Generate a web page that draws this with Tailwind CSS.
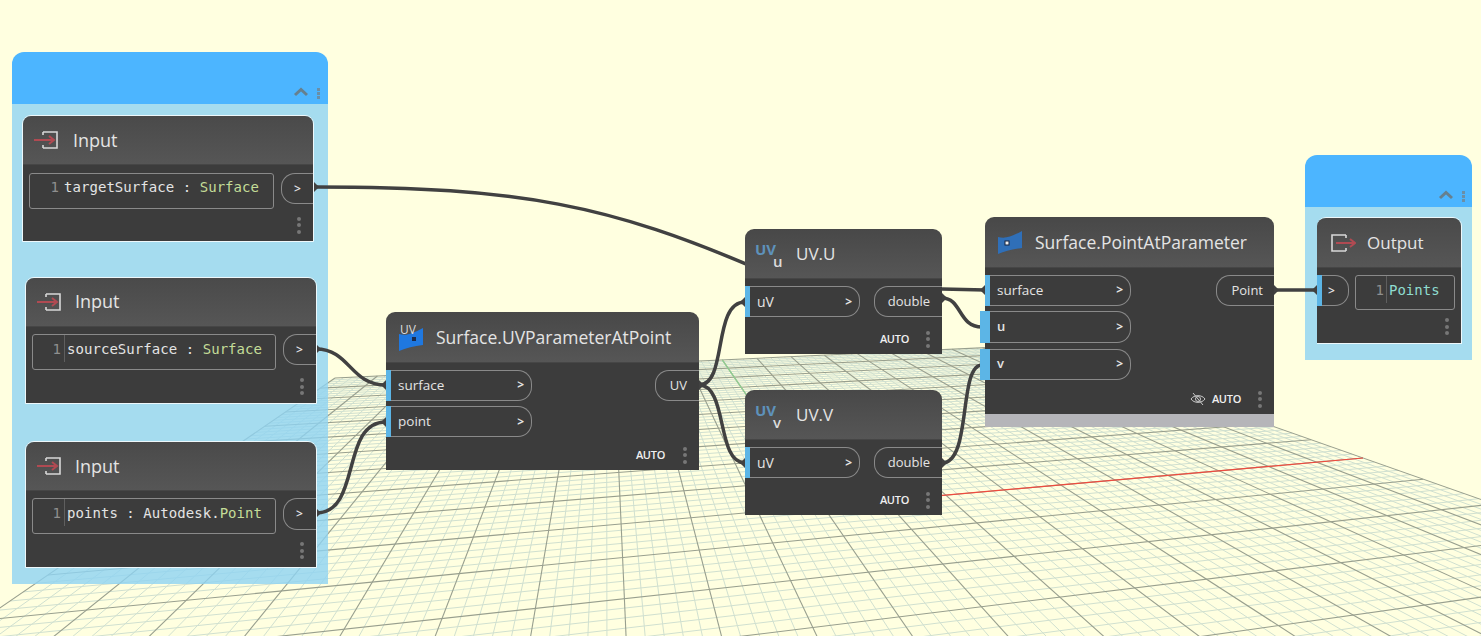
<!DOCTYPE html>
<html lang="en">
<head>
<meta charset="UTF-8">
<title>Dynamo graph</title>
<script src="https://cdn.jsdelivr.net/npm/@tailwindcss/browser@4"></script>
</head>
<body class="bg-[#ffffe0]">
<div class="relative w-[1481px] h-[636px] overflow-hidden bg-[#ffffe0] font-['Open_Sans',sans-serif] text-[#e4e4e4]">

  <!-- background grid, filled in by the script -->
  <svg id="grid" class="absolute inset-0" width="1481" height="636"></svg>

  <!-- groups -->
  <div class="absolute left-[12px] top-[52px] w-[316px] h-[532px] flex flex-col">
    <div class="h-[52px] bg-[#4cb5ff] rounded-t-[12px] flex items-end justify-end pr-[8px] pb-[5px] gap-[8px]">
      <svg width="16" height="10" viewBox="0 0 16 10" class="mb-[2px]"><path d="M2 8 L8 2.5 L14 8" fill="none" stroke="#66808f" stroke-width="3"/></svg>
      <div class="flex flex-col gap-[1px]"><span class="size-[3px] bg-[#6a8fa8]"></span><span class="size-[3px] bg-[#6a8fa8]"></span><span class="size-[3px] bg-[#6a8fa8]"></span></div>
    </div>
    <div class="flex-1 bg-[#8ed3f3]/80"></div>
  </div>
  <div class="absolute left-[1305px] top-[155px] w-[167px] h-[205px] flex flex-col">
    <div class="h-[52px] bg-[#4cb5ff] rounded-t-[12px] flex items-end justify-end pr-[7px] pb-[5px] gap-[8px]">
      <svg width="16" height="10" viewBox="0 0 16 10" class="mb-[2px]"><path d="M2 8 L8 2.5 L14 8" fill="none" stroke="#66808f" stroke-width="3"/></svg>
      <div class="flex flex-col gap-[1px]"><span class="size-[3px] bg-[#6a8fa8]"></span><span class="size-[3px] bg-[#6a8fa8]"></span><span class="size-[3px] bg-[#6a8fa8]"></span></div>
    </div>
    <div class="flex-1 bg-[#a5dcef]"></div>
  </div>

  <!-- wires -->
  <svg class="absolute inset-0" width="1481" height="636" fill="none" stroke="#414141" stroke-width="3.5">
    <path d="M316 187 C 520 187, 610 205, 760 270"/>
    <path d="M316 349 C 350 349, 350 385, 386 385"/>
    <path d="M316 513 C 362 513, 340 422, 386 422"/>
    <path d="M699 385 C 728 385, 712 302, 745 302"/>
    <path d="M699 385 C 728 385, 716 463, 745 463"/>
    <path d="M942 289 L985 290"/>
    <path d="M942 298 C 962 298, 958 327, 982 327"/>
    <path d="M942 463 C 972 463, 958 365, 982 365"/>
    <path d="M1274 290 L1317 290"/>
    <g fill="#414141" stroke="none">
      <path d="M314 182 L319 187 L314 192 Z"/><path d="M316 344 L321 349 L316 354 Z"/><path d="M316 508 L321 513 L316 518 Z"/>
      <path d="M386 380 L381 385 L386 390 Z"/><path d="M386 417 L381 422 L386 427 Z"/>
      <path d="M699 380 L704 385 L699 390 Z"/><path d="M745 297 L740 302 L745 307 Z"/><path d="M745 458 L740 463 L745 468 Z"/>
      <path d="M942 293 L947 298 L942 303 Z"/><path d="M942 458 L947 463 L942 468 Z"/>
      <path d="M985 285 L980 290 L985 295 Z"/>
      <path d="M1274 285 L1279 290 L1274 295 Z"/><path d="M1317 285 L1312 290 L1317 295 Z"/>
    </g>
  </svg>

  <!-- Input 1 -->
  <div class="absolute left-[22px] top-[115px] w-[292px] h-[127px] flex flex-col border border-[#eef8fb] rounded-t-[9px] overflow-hidden">
    <div class="h-[49px] shrink-0 bg-linear-to-b from-[#4a4a4a] to-[#565656] border-b border-[#464646] flex items-center pl-[11px] gap-[15px] text-[18px]">
      <svg width="24" height="18" viewBox="0 0 24 18"><path d="M9 1 H23 V17 H9 M9 1 V4 M9 14 V17" fill="none" stroke="#d8d8d8" stroke-width="1.6"/><path d="M0 9 H19 M15 5 L20 9 L15 13" fill="none" stroke="#b04a52" stroke-width="2"/></svg>
      <span>Input</span>
    </div>
    <div class="flex-1 bg-[#3c3c3c] flex flex-col pt-[8px]">
      <div class="flex pl-[6px] gap-[7px]">
        <div class="w-[245px] h-[36px] border border-[#8a8a8a] rounded-[3px] flex items-start pt-[4px] font-['DejaVu_Sans_Mono',monospace] text-[14px] leading-[18px] tracking-[0.05px]">
          <span class="w-[29px] text-right text-[#8f8f8f]">1</span><span class="pl-[5px]">targetSurface : <span class="text-[#c4dc98]">Surface</span></span>
        </div>
        <div class="flex-1 h-[31px] border border-r-0 border-[#8a8a8a] rounded-l-[14px] flex items-center pl-[12px] text-[12px] font-semibold">&gt;</div>
      </div>
      <div class="flex-1 flex items-center justify-end pr-[12px]">
        <div class="flex flex-col gap-[2.5px]"><span class="size-[4px] rounded-full bg-[#777]"></span><span class="size-[4px] rounded-full bg-[#777]"></span><span class="size-[4px] rounded-full bg-[#777]"></span></div>
      </div>
    </div>
  </div>

  <!-- Input 2 -->
  <div class="absolute left-[25px] top-[277px] w-[292px] h-[127px] flex flex-col border border-[#eef8fb] rounded-t-[9px] overflow-hidden">
    <div class="h-[49px] shrink-0 bg-linear-to-b from-[#4a4a4a] to-[#565656] border-b border-[#464646] flex items-center pl-[11px] gap-[14px] text-[18px]">
      <svg width="24" height="18" viewBox="0 0 24 18"><path d="M9 1 H23 V17 H9 M9 1 V4 M9 14 V17" fill="none" stroke="#d8d8d8" stroke-width="1.6"/><path d="M0 9 H19 M15 5 L20 9 L15 13" fill="none" stroke="#b04a52" stroke-width="2"/></svg>
      <span class="-mt-[2px]">Input</span>
    </div>
    <div class="flex-1 bg-[#3c3c3c] flex flex-col pt-[7px]">
      <div class="flex pl-[6px] gap-[7px]">
        <div class="w-[244px] h-[36px] border border-[#8a8a8a] rounded-[3px] flex items-start font-['DejaVu_Sans_Mono',monospace] text-[14px] leading-[18px] tracking-[0.05px]">
          <span class="w-[28px] mt-[5px] text-right text-[#8f8f8f]">1</span><span class="ml-[3px] pl-[2px] pt-[5px] pb-[4px] border-l border-[#5f5f5f]">sourceSurface : <span class="text-[#c4dc98]">Surface</span></span>
        </div>
        <div class="flex-1 h-[31px] border border-r-0 border-[#8a8a8a] rounded-l-[14px] flex items-center pl-[12px] text-[12px] font-semibold">&gt;</div>
      </div>
      <div class="flex-1 flex items-center justify-end pr-[12px]">
        <div class="flex flex-col gap-[2.5px]"><span class="size-[4px] rounded-full bg-[#777]"></span><span class="size-[4px] rounded-full bg-[#777]"></span><span class="size-[4px] rounded-full bg-[#777]"></span></div>
      </div>
    </div>
  </div>

  <!-- Input 3 -->
  <div class="absolute left-[25px] top-[441px] w-[292px] h-[127px] flex flex-col border border-[#eef8fb] rounded-t-[9px] overflow-hidden">
    <div class="h-[49px] shrink-0 bg-linear-to-b from-[#4a4a4a] to-[#565656] border-b border-[#464646] flex items-center pl-[11px] gap-[14px] text-[18px]">
      <svg width="24" height="18" viewBox="0 0 24 18"><path d="M9 1 H23 V17 H9 M9 1 V4 M9 14 V17" fill="none" stroke="#d8d8d8" stroke-width="1.6"/><path d="M0 9 H19 M15 5 L20 9 L15 13" fill="none" stroke="#b04a52" stroke-width="2"/></svg>
      <span>Input</span>
    </div>
    <div class="flex-1 bg-[#3c3c3c] flex flex-col pt-[7px]">
      <div class="flex pl-[6px] gap-[7px]">
        <div class="w-[244px] h-[36px] border border-[#8a8a8a] rounded-[3px] flex items-start font-['DejaVu_Sans_Mono',monospace] text-[14px] leading-[18px] tracking-[0.05px]">
          <span class="w-[28px] mt-[5px] text-right text-[#8f8f8f]">1</span><span class="ml-[3px] pl-[2px] pt-[5px] pb-[4px] border-l border-[#5f5f5f]">points : Autodesk.<span class="text-[#c4dc98]">Point</span></span>
        </div>
        <div class="flex-1 h-[32px] border border-r-0 border-[#8a8a8a] rounded-l-[14px] flex items-center pl-[12px] text-[12px] font-semibold">&gt;</div>
      </div>
      <div class="flex-1 flex items-center justify-end pr-[12px]">
        <div class="flex flex-col gap-[2.5px]"><span class="size-[4px] rounded-full bg-[#777]"></span><span class="size-[4px] rounded-full bg-[#777]"></span><span class="size-[4px] rounded-full bg-[#777]"></span></div>
      </div>
    </div>
  </div>

  <!-- Surface.UVParameterAtPoint -->
  <div class="absolute left-[386px] top-[312px] w-[313px] h-[158px] flex flex-col rounded-t-[9px]">
    <div class="h-[51px] shrink-0 rounded-t-[9px] bg-linear-to-b from-[#484848] to-[#565656] border-b border-[#464646] flex items-center pl-[12px] gap-[12px] text-[17.5px]">
      <div class="relative w-[26px] h-[30px]">
        <svg class="absolute left-0 top-[5px]" width="26" height="24" viewBox="0 0 26 24"><path d="M1 7 C8 9 14 7 25 1 V18 C16 19 8 21 1 24 Z" fill="#1f78e0"/><rect x="14" y="10" width="4" height="4" fill="#1b2a4a"/></svg>
        <span class="absolute left-[2px] top-[1px] text-[12px] leading-[14px] text-[#dcdcdc]">UV</span>
      </div>
      <span>Surface.UVParameterAtPoint</span>
    </div>
    <div class="flex-1 bg-[#3c3c3c] flex flex-col">
      <div class="flex justify-between pt-[7px]">
        <div class="flex flex-col gap-[5px]">
          <div class="flex h-[31px] w-[146px]"><div class="w-[5px] bg-[#5cb5e6]"></div><div class="flex-1 border border-l-0 border-[#8a8a8a] rounded-r-[14px] flex items-center justify-between pl-[7px] pr-[7px] text-[13.5px] font-medium pb-[1px]"><span>surface</span><span class="font-bold text-[12px]">&gt;</span></div></div>
          <div class="flex h-[31px] w-[146px]"><div class="w-[5px] bg-[#5cb5e6]"></div><div class="flex-1 border border-l-0 border-[#8a8a8a] rounded-r-[14px] flex items-center justify-between pl-[7px] pr-[7px] text-[13.5px] font-medium"><span>point</span><span class="font-bold text-[12px]">&gt;</span></div></div>
        </div>
        <div class="w-[44px] h-[31px] border border-r-0 border-[#8a8a8a] rounded-l-[14px] flex items-center justify-end pr-[12px] text-[13px] font-medium">UV</div>
      </div>
      <div class="flex-1 flex items-center justify-end gap-[18px] pr-[12px] pt-[3px]">
        <span class="text-[11px] font-semibold tracking-[-0.3px] text-[#f0f0f0]">AUTO</span>
        <div class="flex flex-col gap-[2.5px]"><span class="size-[4px] rounded-full bg-[#777]"></span><span class="size-[4px] rounded-full bg-[#777]"></span><span class="size-[4px] rounded-full bg-[#777]"></span></div>
      </div>
    </div>
  </div>

  <!-- UV.U -->
  <div class="absolute left-[745px] top-[229px] w-[197px] h-[125px] flex flex-col rounded-t-[9px]">
    <div class="h-[50px] shrink-0 rounded-t-[9px] bg-linear-to-b from-[#484848] to-[#565656] border-b border-[#464646] flex items-center pl-[10px] gap-[11px] text-[17px]">
      <div class="relative w-[30px] h-[34px]">
        <span class="absolute left-0 top-[5px] text-[15px] leading-[14px] font-bold text-[#5e92bb]">UV</span>
        <span class="absolute left-[18px] top-[19px] text-[15px] leading-[10px] font-semibold text-[#dcdcdc]">u</span>
      </div>
      <span>UV.U</span>
    </div>
    <div class="flex-1 bg-[#3c3c3c] flex flex-col">
      <div class="flex justify-between pt-[7px]">
        <div class="flex h-[31px] w-[115px]"><div class="w-[5px] bg-[#5cb5e6]"></div><div class="flex-1 border border-l-0 border-[#8a8a8a] rounded-r-[14px] flex items-center justify-between pl-[7px] pr-[7px] text-[14px] font-medium"><span>uV</span><span class="font-bold text-[12px]">&gt;</span></div></div>
        <div class="w-[68px] h-[31px] border border-r-0 border-[#8a8a8a] rounded-l-[14px] flex items-center justify-end pr-[12px] text-[13px] font-medium pt-[1px]">double</div>
      </div>
      <div class="flex-1 flex items-center justify-end gap-[17px] pr-[12px] pt-[7px]">
        <span class="text-[11px] font-semibold tracking-[-0.3px] text-[#f0f0f0]">AUTO</span>
        <div class="flex flex-col gap-[2.5px]"><span class="size-[4px] rounded-full bg-[#777]"></span><span class="size-[4px] rounded-full bg-[#777]"></span><span class="size-[4px] rounded-full bg-[#777]"></span></div>
      </div>
    </div>
  </div>

  <!-- UV.V -->
  <div class="absolute left-[745px] top-[390px] w-[197px] h-[125px] flex flex-col rounded-t-[9px]">
    <div class="h-[50px] shrink-0 rounded-t-[9px] bg-linear-to-b from-[#484848] to-[#565656] border-b border-[#464646] flex items-center pl-[10px] gap-[11px] text-[17px]">
      <div class="relative w-[30px] h-[34px]">
        <span class="absolute left-0 top-[5px] text-[15px] leading-[14px] font-bold text-[#5e92bb]">UV</span>
        <span class="absolute left-[18px] top-[19px] text-[15px] leading-[10px] font-semibold text-[#dcdcdc]">v</span>
      </div>
      <span>UV.V</span>
    </div>
    <div class="flex-1 bg-[#3c3c3c] flex flex-col">
      <div class="flex justify-between pt-[7px]">
        <div class="flex h-[31px] w-[115px]"><div class="w-[5px] bg-[#5cb5e6]"></div><div class="flex-1 border border-l-0 border-[#8a8a8a] rounded-r-[14px] flex items-center justify-between pl-[7px] pr-[7px] text-[14px] font-medium"><span>uV</span><span class="font-bold text-[12px]">&gt;</span></div></div>
        <div class="w-[68px] h-[31px] border border-r-0 border-[#8a8a8a] rounded-l-[14px] flex items-center justify-end pr-[12px] text-[13px] font-medium pt-[1px]">double</div>
      </div>
      <div class="flex-1 flex items-center justify-end gap-[17px] pr-[12px] pt-[7px]">
        <span class="text-[11px] font-semibold tracking-[-0.3px] text-[#f0f0f0]">AUTO</span>
        <div class="flex flex-col gap-[2.5px]"><span class="size-[4px] rounded-full bg-[#777]"></span><span class="size-[4px] rounded-full bg-[#777]"></span><span class="size-[4px] rounded-full bg-[#777]"></span></div>
      </div>
    </div>
  </div>

  <!-- Surface.PointAtParameter -->
  <div class="absolute left-[985px] top-[217px] w-[289px] h-[210px] flex flex-col rounded-t-[9px]">
    <div class="h-[51px] shrink-0 rounded-t-[9px] bg-linear-to-b from-[#484848] to-[#565656] border-b border-[#464646] flex items-center pl-[12px] gap-[12px] text-[17.5px]">
      <svg width="26" height="24" viewBox="0 0 26 24"><path d="M1 7 C8 9 14 7 25 1 V18 C16 19 8 21 1 24 Z" fill="#2f6fb8"/><rect x="8" y="11" width="4" height="4" fill="#f0f0f0" stroke="#15233f" stroke-width="1"/></svg>
      <span>Surface.PointAtParameter</span>
    </div>
    <div class="flex-1 bg-[#3c3c3c] flex flex-col">
      <div class="flex justify-between pt-[7px]">
        <div class="flex flex-col">
          <div class="flex h-[31px] w-[146px]"><div class="w-[5px] bg-[#5cb5e6]"></div><div class="flex-1 border border-l-0 border-[#8a8a8a] rounded-r-[14px] flex items-center justify-between pl-[7px] pr-[7px] text-[13.5px] font-medium pb-[1px]"><span>surface</span><span class="font-bold text-[12px]">&gt;</span></div></div>
          <div class="flex h-[32px] w-[151px] -ml-[5px] mt-[5px]"><div class="w-[10px] bg-[#5cb5e6]"></div><div class="flex-1 border border-l-0 border-[#8a8a8a] rounded-r-[14px] flex items-center justify-between pl-[7px] pr-[7px] text-[13px] font-semibold pb-[1px]"><span>u</span><span class="font-bold text-[12px]">&gt;</span></div></div>
          <div class="flex h-[31px] w-[151px] -ml-[5px] mt-[6px]"><div class="w-[10px] bg-[#5cb5e6]"></div><div class="flex-1 border border-l-0 border-[#8a8a8a] rounded-r-[14px] flex items-center justify-between pl-[7px] pr-[7px] text-[13px] font-semibold pb-[2px]"><span>v</span><span class="font-bold text-[12px]">&gt;</span></div></div>
        </div>
        <div class="w-[58px] h-[31px] border border-r-0 border-[#8a8a8a] rounded-l-[14px] flex items-center justify-end pr-[11px] text-[13px] font-medium">Point</div>
      </div>
      <div class="flex-1 flex items-center justify-end pr-[12px] pt-[4px]">
        <svg width="16" height="14" viewBox="0 0 16 14" fill="none" stroke="#c8c8c8" stroke-width="1" class="mr-[6px]"><path d="M1 7 C4 2.5 12 2.5 15 7 C12 11.5 4 11.5 1 7 Z"/><circle cx="8" cy="7" r="2.5"/><path d="M3 1 L13 13"/></svg>
        <span class="text-[11px] font-semibold tracking-[-0.3px] text-[#f0f0f0] mr-[17px]">AUTO</span>
        <div class="flex flex-col gap-[2.5px]"><span class="size-[4px] rounded-full bg-[#777]"></span><span class="size-[4px] rounded-full bg-[#777]"></span><span class="size-[4px] rounded-full bg-[#777]"></span></div>
      </div>
    </div>
    <div class="h-[13px] bg-[#b5b5b9]"></div>
  </div>

  <!-- Output -->
  <div class="absolute left-[1317px] top-[217px] w-[145px] h-[127px] flex flex-col border border-[#eef8fb] border-l-0 rounded-t-[9px] overflow-hidden">
    <div class="h-[50px] shrink-0 bg-linear-to-b from-[#4a4a4a] to-[#565656] border-b border-[#464646] flex items-center pl-[14px] gap-[11px] text-[17px]">
      <svg width="25" height="18" viewBox="0 0 25 18"><path d="M15 1 H1 V17 H15 M15 1 V4 M15 14 V17" fill="none" stroke="#d8d8d8" stroke-width="1.6"/><path d="M5 9 H23 M19 5 L24 9 L19 13" fill="none" stroke="#b04a52" stroke-width="2"/></svg>
      <span>Output</span>
    </div>
    <div class="flex-1 bg-[#3c3c3c] flex flex-col pt-[7px]">
      <div class="flex gap-[6px]">
        <div class="flex h-[31px] w-[32px]"><div class="w-[5px] bg-[#5cb5e6]"></div><div class="flex-1 border border-l-0 border-[#8a8a8a] rounded-r-[14px] flex items-center pl-[6px] text-[12px] font-semibold">&gt;</div></div>
        <div class="w-[100px] h-[35px] border border-[#8a8a8a] rounded-[3px] flex items-start font-['DejaVu_Sans_Mono',monospace] text-[14px] leading-[18px]">
          <span class="w-[28px] mt-[5px] text-right text-[#8f8f8f]">1</span><span class="ml-[2px] pl-[2px] pt-[5px] pb-[4px] border-l border-[#5f5f5f] text-[#8fdcd0]">Points</span>
        </div>
      </div>
      <div class="flex-1 flex items-center justify-end pr-[12px]">
        <div class="flex flex-col gap-[2.5px]"><span class="size-[4px] rounded-full bg-[#777]"></span><span class="size-[4px] rounded-full bg-[#777]"></span><span class="size-[4px] rounded-full bg-[#777]"></span></div>
      </div>
    </div>
  </div>
</div>

<script>
  // projective map of the ground plane; s across, t=1 is the red axis line
  var p00 = [335, 378], p10 = [1042, 345], p11 = [1363, 458], p01 = [48, 575];

  function makeHomography() {
    var dx1 = p10[0] - p11[0], dx2 = p01[0] - p11[0], sx = p00[0] - p10[0] + p11[0] - p01[0];
    var dy1 = p10[1] - p11[1], dy2 = p01[1] - p11[1], sy = p00[1] - p10[1] + p11[1] - p01[1];
    var det = dx1 * dy2 - dx2 * dy1;
    var g = (sx * dy2 - dx2 * sy) / det;
    var h = (dx1 * sy - sx * dy1) / det;
    return {
      a: p10[0] - p00[0] + g * p10[0], b: p01[0] - p00[0] + h * p01[0], c: p00[0],
      d: p10[1] - p00[1] + g * p10[1], e: p01[1] - p00[1] + h * p01[1], f: p00[1],
      g: g, h: h
    };
  }

  var H = makeHomography();
  var MAJOR = 20, MINOR = 5, N = MAJOR * MINOR;

  function project(s, t) {
    var w = H.g * s + H.h * t + 1;
    return [(H.a * s + H.b * t + H.c) / w, (H.d * s + H.e * t + H.f) / w];
  }

  // last t before the plane runs behind the camera
  function limitT(s) {
    var t = 2;
    while (t > 0 && H.g * s + H.h * t + 1 < 0.08) t -= 0.005;
    return t;
  }

  function line(a, b, color, width) {
    return '<line x1="' + a[0].toFixed(1) + '" y1="' + a[1].toFixed(1) + '" x2="' + b[0].toFixed(1) + '" y2="' + b[1].toFixed(1) +
      '" stroke="' + color + '" stroke-width="' + width + '"/>';
  }

  var minor = '', major = '';
  for (var i = 0; i <= N; i++) {
    var isMajor = i % MINOR === 0;
    var color = isMajor ? '#989f8e' : '#d0e0d0';
    var width = isMajor ? 1.1 : 1;
    var s = i / N, t = (i / N) * 2;
    var across = line(project(s, 0), project(s, limitT(s)), color, width);
    var along = '';
    if (H.g + H.h * t + 1 > 0.08 && H.h * t + 1 > 0.08) along = line(project(0, t), project(1, t), color, width);
    if (isMajor) major += across + along; else minor += across + along;
  }

  var axes = line(project(0.5, 1), project(1, 1), '#ef4b3f', 1.2) + line(project(0.5, 1), project(0.5, 0), '#8fd08f', 1.2);
  document.getElementById('grid').innerHTML = minor + major + axes;
</script>
</body>
</html>
